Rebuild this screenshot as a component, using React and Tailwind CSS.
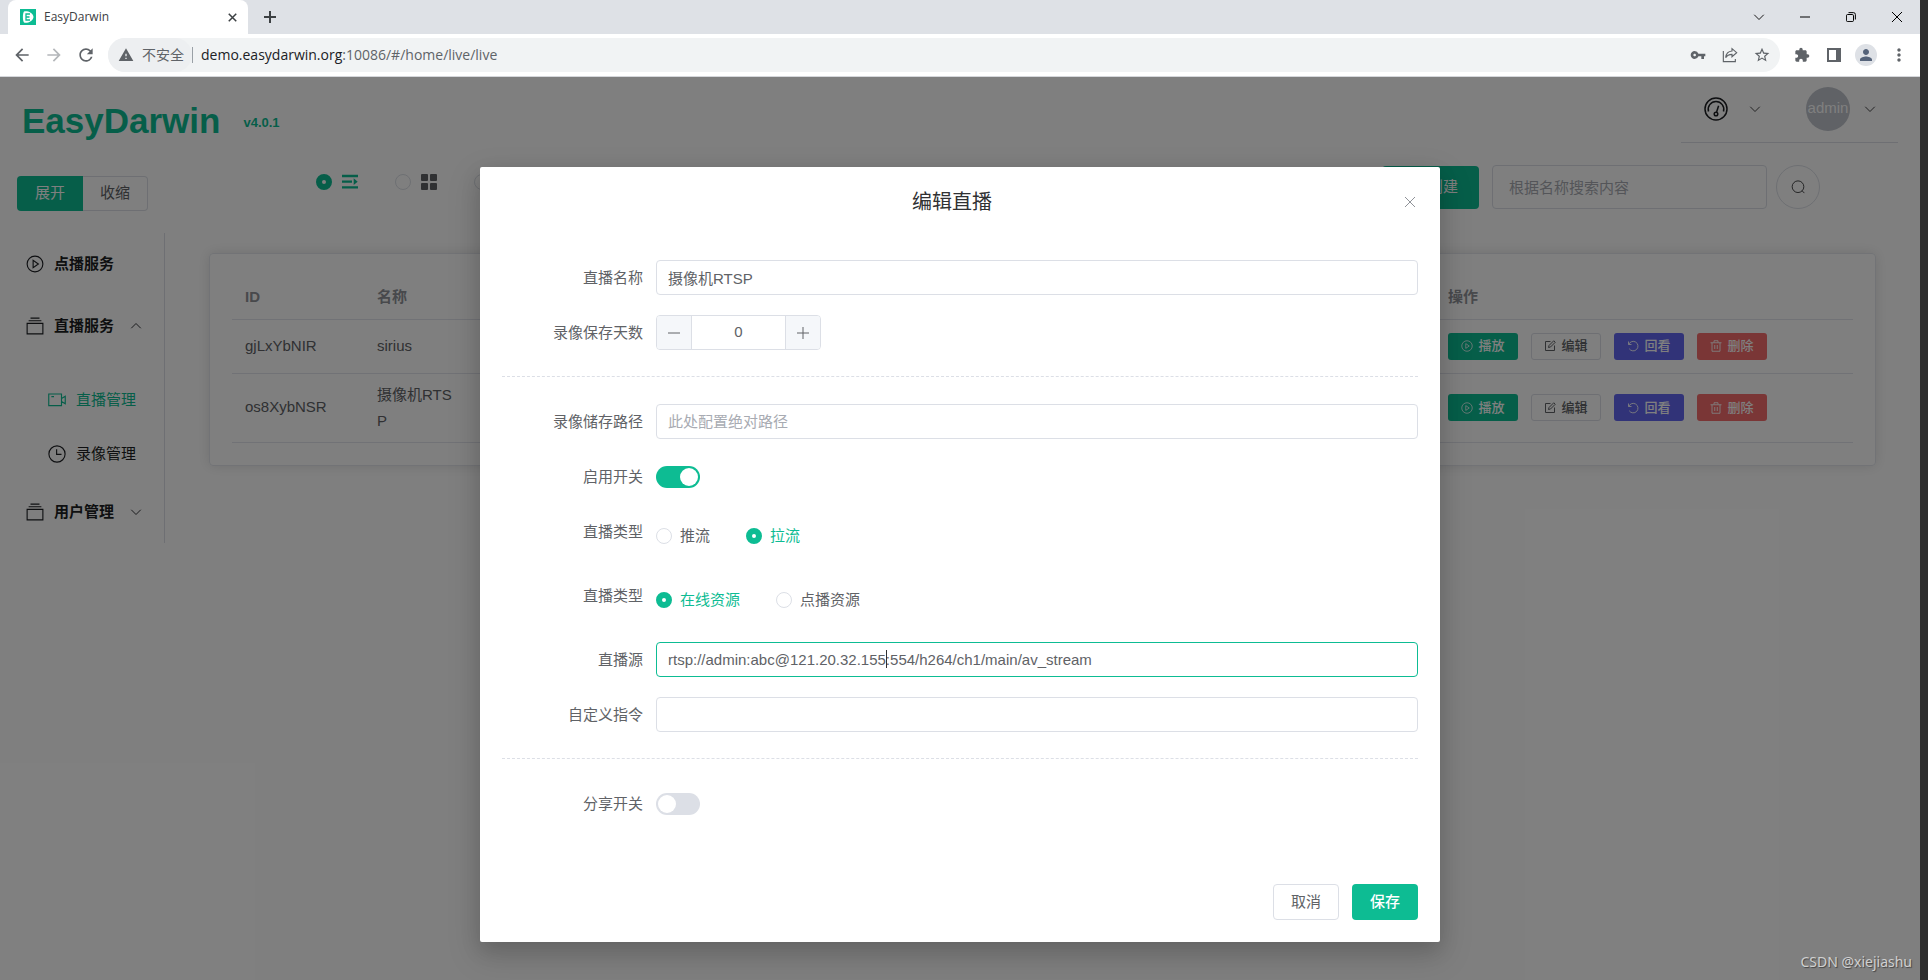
import { useEffect, useRef, useState } from "react";
import {
  MdArrowBack,
  MdArrowForward,
  MdExtension,
  MdMoreVert,
  MdPerson,
  MdRefresh,
  MdStarBorder,
  MdVpnKey,
  MdWarning,
} from "react-icons/md";

const streams = [
  { id: "gjLxYbNIR", name: "sirius" },
  { id: "os8XybNSR", name: "摄像机RTSP" },
];

const Svg = ({ className, children, width = 1.5 }) => (
  <svg
    viewBox="0 0 24 24"
    fill="none"
    stroke="currentColor"
    strokeWidth={width}
    className={className}
    aria-hidden="true"
  >
    {children}
  </svg>
);

const ChevronIcon = ({ className }) => (
  <Svg className={className} width={1.8}>
    <path d="M2.500 7.500l9.500 9.500 9.500-9.500" />
  </Svg>
);

const PlayIcon = ({ className }) => (
  <Svg className={className}>
    <circle cx="12" cy="12" r="10.5" />
    <path d="M9.5 7.2v9.6l7-4.8z" />
  </Svg>
);

const StackIcon = ({ className }) => (
  <Svg className={className}>
    <path d="M1.5 8.5h21v14h-21zM3.5 5h17M6 1.5h12" />
  </Svg>
);

const CameraIcon = ({ className }) => (
  <Svg className={className}>
    <path d="M1 4h17v15.5H1zM18 10l5-3v10L18 14M4.5 7.5H8" />
  </Svg>
);

const ClockIcon = ({ className }) => (
  <Svg className={className}>
    <circle cx="12" cy="12" r="10.8" />
    <path d="M11.5 5.5v7H18" />
  </Svg>
);

const ListIcon = ({ className }) => (
  <Svg className={className} width={3.4}>
    <path d="M0 3h24M0 11.5h15M0 20h24" />
    <path d="M17.5 6.500l6 5-6 5z" fill="currentColor" stroke="none" />
  </Svg>
);

const GridIcon = ({ className }) => (
  <svg viewBox="0 0 24 24" fill="currentColor" className={className} aria-hidden="true">
    <rect x="0" y="0" width="10.5" height="10.5" rx="1.5" />
    <rect x="13.5" y="0" width="10.5" height="10.5" rx="1.5" />
    <rect x="0" y="13.5" width="10.5" height="10.5" rx="1.5" />
    <rect x="13.5" y="13.5" width="10.5" height="10.5" rx="1.5" />
  </svg>
);

const GaugeIcon = ({ className }) => (
  <Svg className={className}>
    <circle cx="12" cy="12" r="11" />
    <path d="M4.500 14.500a7.800 7.800 0 1 1 15 0" />
    <circle cx="12" cy="17" r="1.8" />
    <path d="M12.6 15l2-6.2" />
  </Svg>
);

const EditIcon = ({ className }) => (
  <Svg className={className} width={2}>
    <path d="M13 3H3v18h18V11M9 15l1-4 9.500-9.500 3 3L13 14z" />
  </Svg>
);

const ReplayIcon = ({ className }) => (
  <Svg className={className} width={1.8}>
    <path d="M3 3v6h6M3.500 9a9.500 9.500 0 1 1 1 8.500" />
  </Svg>
);

const TrashIcon = ({ className }) => (
  <Svg className={className} width={1.8}>
    <path d="M1 5.500h22M4 5.500V22.500h16V5.500M8 5V1.500h8V5M9.500 10v8M14.500 10v8" />
  </Svg>
);

const SearchIcon = ({ className }) => (
  <Svg className={className}>
    <circle cx="12" cy="11.5" r="10" />
    <path d="M19 18.500l4 4" />
  </Svg>
);

const CrossIcon = ({ className, width = 2 }) => (
  <Svg className={className} width={width}>
    <path d="M2 2l20 20M22 2L2 22" />
  </Svg>
);

const BrowserChrome = () => (
  <div className="font-['Open_Sans','Noto_Sans_CJK_SC',sans-serif] border-b border-[#d5d7db] bg-white">
    <div className="flex h-[34px] items-center bg-[#dee1e6]">
      <div className="ml-2 flex h-[34px] w-60 items-center gap-2 rounded-t-lg bg-white pr-2 pl-3">
        <svg viewBox="0 0 16 16" className="size-4" aria-hidden="true">
          <rect width="16" height="16" fill="#0dbc93" />
          <path
            d="M4 2.500c3-1 9 1 9.500 5.500-.5 4.500-6.500 6.500-9.500 5.500-1.500-2-1.500-9 0-11z"
            fill="#fff"
          />
          <path d="M10 5H6v6h4M6 8h3.500" stroke="#0dbc93" strokeWidth="1.3" fill="none" />
        </svg>
        <span className="flex-1 text-xs text-[#3c4043]">EasyDarwin</span>
        <button aria-label="Close tab" className="grid size-4 place-items-center text-[#3c4043]">
          <CrossIcon className="size-[9px]" width={4} />
        </button>
      </div>
      <button aria-label="New tab" className="ml-4 text-[#3c4043]">
        <Svg className="size-3" width={4}>
          <path d="M12 0v24M0 12h24" />
        </Svg>
      </button>
      <div className="ml-auto flex h-7 text-black">
        <button aria-label="Search tabs" className="grid w-[46px] place-items-center">
          <ChevronIcon className="size-3" />
        </button>
        <button aria-label="Minimize" className="grid w-[46px] place-items-center">
          <Svg className="size-[10px]" width={2.4}>
            <path d="M0 12h24" />
          </Svg>
        </button>
        <button aria-label="Restore" className="grid w-[46px] place-items-center">
          <Svg className="size-[10px]" width={2.4}>
            <rect x="1" y="6" width="17" height="17" rx="3" />
            <path d="M6 1.500h12a4.500 4.500 0 0 1 4.500 4.500v12" />
          </Svg>
        </button>
        <button aria-label="Close" className="grid w-[46px] place-items-center">
          <CrossIcon className="size-[12px]" />
        </button>
      </div>
    </div>

    <div className="flex h-[42px] items-center pr-[11px] pl-3 text-[#5f6368]">
      <button aria-label="Back" className="mr-3">
        <MdArrowBack className="size-5" />
      </button>
      <button aria-label="Forward" className="mr-3 text-[#b4b7ba]">
        <MdArrowForward className="size-5" />
      </button>
      <button aria-label="Reload" className="mr-3">
        <MdRefresh className="size-5" />
      </button>
      <div className="flex h-[34px] flex-1 items-center rounded-full bg-[#f1f3f4] text-sm">
        <div className="flex h-[34px] items-center gap-2 rounded-full bg-[#edeff1] pr-2 pl-[10px]">
          <MdWarning className="size-4" />
          <span>不安全</span>
        </div>
        <span className="mr-2 h-4 w-px bg-[#9aa0a6]" />
        <span className="flex-1">
          <span className="text-[#202124]">demo.easydarwin.org</span>:10086/#/home/live/live
        </span>
        <div className="flex items-center gap-4 pr-[10px]">
          <MdVpnKey className="size-4" />
          <Svg className="size-4" width={1.7}>
            <path d="M2 6v16h18v-4M15 2.500l7 6-7 6v-3.500c-5 0-7.500 1.500-9.500 5 .5-5.500 4-9.500 9.500-10z" />
          </Svg>
          <MdStarBorder className="size-4 scale-110" />
        </div>
      </div>
      <button aria-label="Extensions" className="ml-[14px]">
        <MdExtension className="size-4" />
      </button>
      <button aria-label="Side panel" className="ml-4">
        <svg viewBox="0 0 16 16" className="size-4" aria-hidden="true">
          <path d="M1 1h14v14H1zM3 3v10h7V3z" fill="currentColor" fillRule="evenodd" />
        </svg>
      </button>
      <button
        aria-label="Profile"
        className="ml-[13px] grid size-[22px] place-items-center rounded-full bg-[#dee1e6] text-[#55637a]"
      >
        <MdPerson className="size-[18px]" />
      </button>
      <button aria-label="Menu" className="ml-3">
        <MdMoreVert className="size-5" />
      </button>
    </div>
  </div>
);

const MenuItem = ({ icon, label, arrow }) => (
  <a href="#menu" className="flex h-[62px] items-center pl-[26px] font-bold text-[#1d1f23]">
    {icon}
    <span className="ml-[10px] w-[76px]">{label}</span>
    {arrow}
  </a>
);

const Sidebar = () => (
  <aside className="w-[165px] shrink-0 pt-[33px]">
    <div className="ml-[17px] flex h-[35px] w-[131px]">
      <button className="w-[66px] rounded-l bg-[#0dbc93] text-white">展开</button>
      <button className="flex-1 rounded-r border border-l-0 border-[#dcdfe6] text-[#606266]">
        收缩
      </button>
    </div>
    <nav className="mt-[22px] border-r border-[#dcdfe6]">
      <MenuItem icon={<PlayIcon className="size-[18px]" />} label="点播服务" />
      <MenuItem
        icon={<StackIcon className="size-[18px]" />}
        label="直播服务"
        arrow={<ChevronIcon className="size-3 rotate-180" />}
      />
      <div className="pt-4">
        <a href="#live" className="flex h-[54px] items-center gap-[10px] pl-12 text-[#0dbc93]">
          <CameraIcon className="size-[18px]" />
          直播管理
        </a>
        <a href="#record" className="flex h-[54px] items-center gap-[10px] pl-12 text-[#1d1f23]">
          <ClockIcon className="size-[18px]" />
          录像管理
        </a>
      </div>
      <MenuItem
        icon={<StackIcon className="size-[18px]" />}
        label="用户管理"
        arrow={<ChevronIcon className="size-3" />}
      />
    </nav>
  </aside>
);

const ActionButton = ({ className, icon, children }) => (
  <button
    className={`flex h-[27px] w-[70px] items-center justify-center gap-[5px] rounded-[3px] text-[13px] font-medium ${className}`}
  >
    {icon}
    {children}
  </button>
);

const StreamTable = () => (
  <div className="mx-11 mt-11 rounded border border-[#e4e7ed] p-[22px] shadow-[0_0_13px_rgba(0,0,0,0.12)]">
    <table className="w-full table-fixed border-collapse text-left text-[#606266]">
      <thead>
        <tr className="h-[43px] border-b border-[#e2e5ec] text-[#909399]">
          <th className="w-[132px] px-[13px]">ID</th>
          <th className="w-[106px] px-[13px]">名称</th>
          <th></th>
          <th className="w-[418px] px-[13px]">操作</th>
        </tr>
      </thead>
      <tbody>
        {streams.map((stream) => (
          <tr key={stream.id} className="h-[54px] border-b border-[#e2e5ec]">
            <td className="px-[13px]">{stream.id}</td>
            <td className="px-[13px] py-2 leading-[26px] break-all">{stream.name}</td>
            <td></td>
            <td className="px-[13px]">
              <div className="flex gap-[13px]">
                <ActionButton
                  className="bg-[#0dbc93] text-white"
                  icon={<PlayIcon className="size-3" />}
                >
                  播放
                </ActionButton>
                <ActionButton
                  className="border border-[#dcdfe6] text-[#606266]"
                  icon={<EditIcon className="size-3" />}
                >
                  编辑
                </ActionButton>
                <ActionButton
                  className="bg-[#6266f0] text-white"
                  icon={<ReplayIcon className="size-3" />}
                >
                  回看
                </ActionButton>
                <ActionButton
                  className="bg-[#f56c6c] text-white"
                  icon={<TrashIcon className="size-3" />}
                >
                  删除
                </ActionButton>
              </div>
            </td>
          </tr>
        ))}
      </tbody>
    </table>
  </div>
);

const radioClass =
  "size-4 shrink-0 appearance-none rounded-full border border-[#dcdfe6] bg-white checked:border-[6px] checked:border-[#0dbc93]";

const Page = () => (
  <div>
    <header className="flex h-[66px] justify-between pr-[22px] pl-[22px]">
      <div className="flex items-center gap-[23px] pt-[22px] font-bold text-[#0dbc93]">
        <h1 className="text-[35px] leading-10">EasyDarwin</h1>
        <span className="pt-1 text-[13px]">v4.0.1</span>
      </div>
      <div className="flex w-[217px] items-center border-b border-[#dcdfe6] pb-[2px] pl-[23px]">
        <GaugeIcon className="size-6 text-[#1d1f23]" />
        <ChevronIcon className="ml-[21px] size-3 text-[#303133]" />
        <span className="ml-[45px] grid size-11 place-items-center rounded-full bg-[#c0c4cc] text-white">
          admin
        </span>
        <ChevronIcon className="ml-[14px] size-3 text-[#303133]" />
      </div>
    </header>

    <div className="flex">
      <Sidebar />
      <main className="min-w-0 flex-1 pt-[22px]">
        <div className="flex justify-between pr-[100px] pl-[151px]">
          <div className="flex h-[34px] items-center">
            <label className="flex items-center gap-[10px] text-[#0dbc93]">
              <input type="radio" name="view" defaultChecked className={radioClass} aria-label="列表" />
              <ListIcon className="size-4" />
            </label>
            <label className="ml-[37px] flex items-center gap-[10px] text-[#606266]">
              <input type="radio" name="view" className={radioClass} aria-label="网格" />
              <GridIcon className="size-4" />
            </label>
            <label className="ml-[37px] flex items-center">
              <input type="radio" name="view" className={radioClass} aria-label="树形" />
            </label>
          </div>
          <div className="flex items-center">
            <button className="flex h-[43px] w-[97px] items-center justify-end gap-2 rounded bg-[#0dbc93] pr-[21px] text-white">
              创建
            </button>
            <input
              type="text"
              aria-label="搜索"
              placeholder="根据名称搜索内容"
              className="ml-[13px] h-11 w-[275px] rounded border border-[#dcdfe6] px-4 placeholder:text-[#a8abb2]"
            />
            <button
              aria-label="搜索"
              className="ml-[9px] grid size-11 place-items-center rounded-full border border-[#dcdfe6] text-[#303133]"
            >
              <SearchIcon className="size-[14px]" />
            </button>
          </div>
        </div>
        <StreamTable />
      </main>
    </div>
  </div>
);

const FormRow = ({ label, htmlFor, children, className = "" }) => (
  <div className={`flex items-start ${className}`}>
    <label htmlFor={htmlFor} className="w-[154px] shrink-0 pr-[13px] text-right leading-[35px]">
      {label}
    </label>
    {children}
  </div>
);

const inputClass =
  "h-[35px] min-w-0 flex-1 rounded border border-[#dcdfe6] px-[11px] outline-none placeholder:text-[#a8abb2] focus:border-[#0dbc93]";

const Switch = ({ id, checked, onChange }) => (
  <span className="flex h-[35px] items-center">
    <input
      id={id}
      type="checkbox"
      role="switch"
      checked={checked}
      onChange={(e) => onChange(e.target.checked)}
      className="flex h-[22px] w-11 appearance-none items-center rounded-full bg-[#dcdfe6] px-[2px] before:size-[18px] before:rounded-full before:bg-white checked:justify-end checked:bg-[#0dbc93]"
    />
  </span>
);

const RadioGroup = ({ name, options, value, onChange }) => (
  <div className="flex h-11 items-center gap-9">
    {options.map((option) => (
      <label
        key={option}
        className={`flex items-center gap-2 ${value === option ? "text-[#0dbc93]" : ""}`}
      >
        <input
          type="radio"
          name={name}
          checked={value === option}
          onChange={() => onChange(option)}
          className={radioClass}
        />
        {option}
      </label>
    ))}
  </div>
);

const EditDialog = () => {
  const [days, setDays] = useState(0);
  const [enabled, setEnabled] = useState(true);
  const [shared, setShared] = useState(false);
  const [mode, setMode] = useState("拉流");
  const [resource, setResource] = useState("在线资源");
  const sourceRef = useRef(null);

  useEffect(() => {
    const caret = "rtsp://admin:abc@121.20.32.155".length;
    sourceRef.current.focus();
    sourceRef.current.setSelectionRange(caret, caret);
  }, []);

  return (
    <div
      role="dialog"
      aria-labelledby="dialog-title"
      className="mx-auto mt-[90px] mb-[37px] w-1/2 rounded-[2px] bg-white p-[22px] text-[#606266] shadow-[0_12px_32px_4px_rgba(0,0,0,0.12),0_8px_20px_rgba(0,0,0,0.12)]"
    >
      <div className="flex h-[26px] items-center">
        <h2 id="dialog-title" className="flex-1 text-center text-xl text-[#303133]">
          编辑直播
        </h2>
        <button aria-label="关闭" className="grid w-4 place-items-center text-[#909399]">
          <CrossIcon className="size-3" />
        </button>
      </div>

      <form className="pt-[45px]">
        <FormRow label="直播名称" htmlFor="name" className="mb-5">
          <input id="name" type="text" defaultValue="摄像机RTSP" className={inputClass} />
        </FormRow>
        <FormRow label="录像保存天数" htmlFor="days">
          <div className="flex h-[35px] w-[165px] overflow-hidden rounded border border-[#dcdfe6]">
            <button
              type="button"
              aria-label="减少"
              onClick={() => setDays(Math.max(0, days - 1))}
              className="grid w-[35px] place-items-center border-r border-[#dcdfe6] bg-[#f5f7fa]"
            >
              <Svg className="size-3" width={2}>
                <path d="M0 12h24" />
              </Svg>
            </button>
            <input
              id="days"
              type="text"
              value={days}
              onChange={(e) => setDays(Number(e.target.value) || 0)}
              className="min-w-0 flex-1 text-center outline-none"
            />
            <button
              type="button"
              aria-label="增加"
              onClick={() => setDays(days + 1)}
              className="grid w-[35px] place-items-center border-l border-[#dcdfe6] bg-[#f5f7fa]"
            >
              <Svg className="size-3" width={2}>
                <path d="M0 12h24M12 0v24" />
              </Svg>
            </button>
          </div>
        </FormRow>

        <hr className="mt-[26px] mb-[27px] border-dashed border-[#dcdfe6]" />

        <FormRow label="录像储存路径" htmlFor="path" className="mb-5">
          <input id="path" type="text" placeholder="此处配置绝对路径" className={inputClass} />
        </FormRow>
        <FormRow label="启用开关" htmlFor="enabled" className="mb-5">
          <Switch id="enabled" checked={enabled} onChange={setEnabled} />
        </FormRow>
        <FormRow label="直播类型" className="mb-5">
          <RadioGroup name="mode" options={["推流", "拉流"]} value={mode} onChange={setMode} />
        </FormRow>
        <FormRow label="直播类型" className="mb-5">
          <RadioGroup
            name="resource"
            options={["在线资源", "点播资源"]}
            value={resource}
            onChange={setResource}
          />
        </FormRow>
        <FormRow label="直播源" htmlFor="source" className="mb-5">
          <div className="relative flex flex-1">
            <input
              id="source"
              ref={sourceRef}
              type="text"
              defaultValue="rtsp://admin:abc@121.20.32.155:554/h264/ch1/main/av_stream"
              className={`caret-transparent ${inputClass}`}
            />
            <span className="pointer-events-none absolute top-2 left-[230px] h-[18px] w-px bg-[#303133]" />
          </div>
        </FormRow>
        <FormRow label="自定义指令" htmlFor="command">
          <input id="command" type="text" className={inputClass} />
        </FormRow>

        <hr className="mt-[26px] mb-[27px] border-dashed border-[#dcdfe6]" />

        <FormRow label="分享开关" htmlFor="shared">
          <Switch id="shared" checked={shared} onChange={setShared} />
        </FormRow>
      </form>

      <div className="flex justify-end gap-[13px] pt-[63px]">
        <button className="h-9 w-[66px] rounded border border-[#dcdfe6]">取消</button>
        <button className="h-9 w-[66px] rounded bg-[#0dbc93] font-medium text-white">保存</button>
      </div>
    </div>
  );
};

const App = () => {
  return (
    <div className="flex min-h-screen bg-[#2d2d2d] font-['Liberation_Sans','Noto_Sans_CJK_SC',sans-serif] text-[15px]">
      <div className="mr-2 flex min-w-0 flex-1 flex-col">
        <BrowserChrome />
        <div className="relative flex-1 bg-white">
          {/* the page sits under the mask, the dialog decides the height */}
          <div className="absolute inset-0 overflow-hidden">
            <Page />
          </div>
          <div className="absolute inset-0 bg-black/50" />
          <div className="relative flow-root">
            <EditDialog />
          </div>
          <span className="absolute right-2 bottom-2 font-['Noto_Sans',sans-serif] text-sm text-[#d0d0d0] [text-shadow:1px_1px_1px_#444]">
            CSDN @xiejiashu
          </span>
        </div>
      </div>
    </div>
  );
};

export default App;
